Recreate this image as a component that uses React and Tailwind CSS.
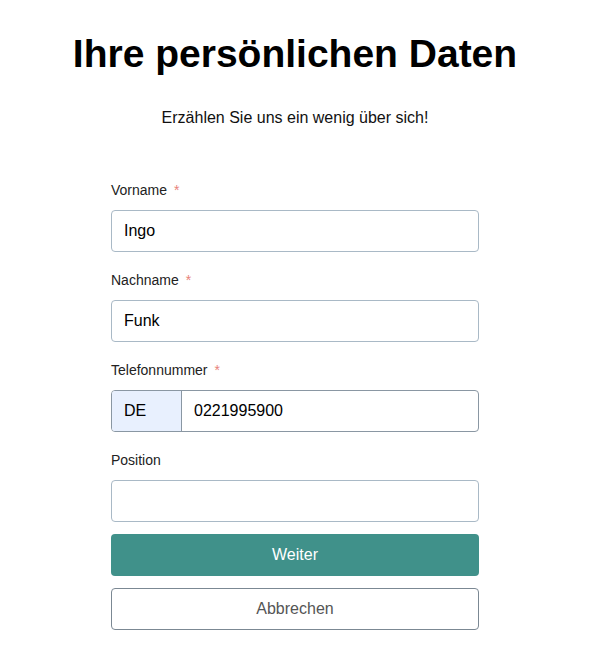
import { useState } from "react"

const Field = ({ label, required, children }) => (
  <div className="mb-[18px]">
    <label className="flex items-center h-5 mb-[10px] text-[14px] text-[#222]">
      {label}
      {required && <span className="ml-[7px] text-[#e8837a]">*</span>}
    </label>
    {children}
  </div>
)

const inputCls =
  "w-full h-[42px] px-[12px] rounded-[4px] border border-[#a9b9c6] bg-white text-[16px] text-black outline-none"

export default function App() {
  const [vorname, setVorname] = useState("Ingo")
  const [nachname, setNachname] = useState("Funk")
  const [telefon, setTelefon] = useState("0221995900")
  const [position, setPosition] = useState("")

  return (
    <div
      className="w-[590px] min-h-[670px] bg-white flex flex-col items-center"
      style={{ fontFamily: '"Liberation Sans", Arial, sans-serif' }}
    >
      <h1 className="mt-[27px] text-[39px] leading-[54px] font-bold text-black">
        Ihre persönlichen Daten
      </h1>
      <p className="mt-[27px] text-[16px] leading-5 text-[#111]">
        Erzählen Sie uns ein wenig über sich!
      </p>

      <form className="w-[368px] mt-[52px]" onSubmit={(e) => e.preventDefault()}>
        <Field label="Vorname" required>
          <input className={inputCls} value={vorname} onChange={(e) => setVorname(e.target.value)} />
        </Field>
        <Field label="Nachname" required>
          <input className={inputCls} value={nachname} onChange={(e) => setNachname(e.target.value)} />
        </Field>
        <Field label="Telefonnummer" required>
          <div className="flex h-[42px] rounded-[4px] border border-[#8a97a3] overflow-hidden">
            <div className="w-[70px] flex items-center px-[12px] bg-[#e8f0fe] border-r border-[#8a97a3] text-[16px] text-black">
              DE
            </div>
            <input
              className="flex-1 min-w-0 px-[12px] text-[16px] text-black outline-none"
              value={telefon}
              onChange={(e) => setTelefon(e.target.value)}
            />
          </div>
        </Field>
        <div>
          <label className="flex items-center h-5 mb-[10px] text-[14px] text-[#222]">Position</label>
          <input className={inputCls} value={position} onChange={(e) => setPosition(e.target.value)} />
        </div>

        <button
          type="submit"
          className="mt-3 w-full h-[42px] rounded-[4px] bg-[#40918a] text-white text-[16px]"
        >
          Weiter
        </button>
        <button
          type="button"
          className="mt-3 w-full h-[42px] rounded-[4px] border border-[#7b8893] bg-white text-[#555] text-[16px]"
        >
          Abbrechen
        </button>
      </form>
    </div>
  )
}
